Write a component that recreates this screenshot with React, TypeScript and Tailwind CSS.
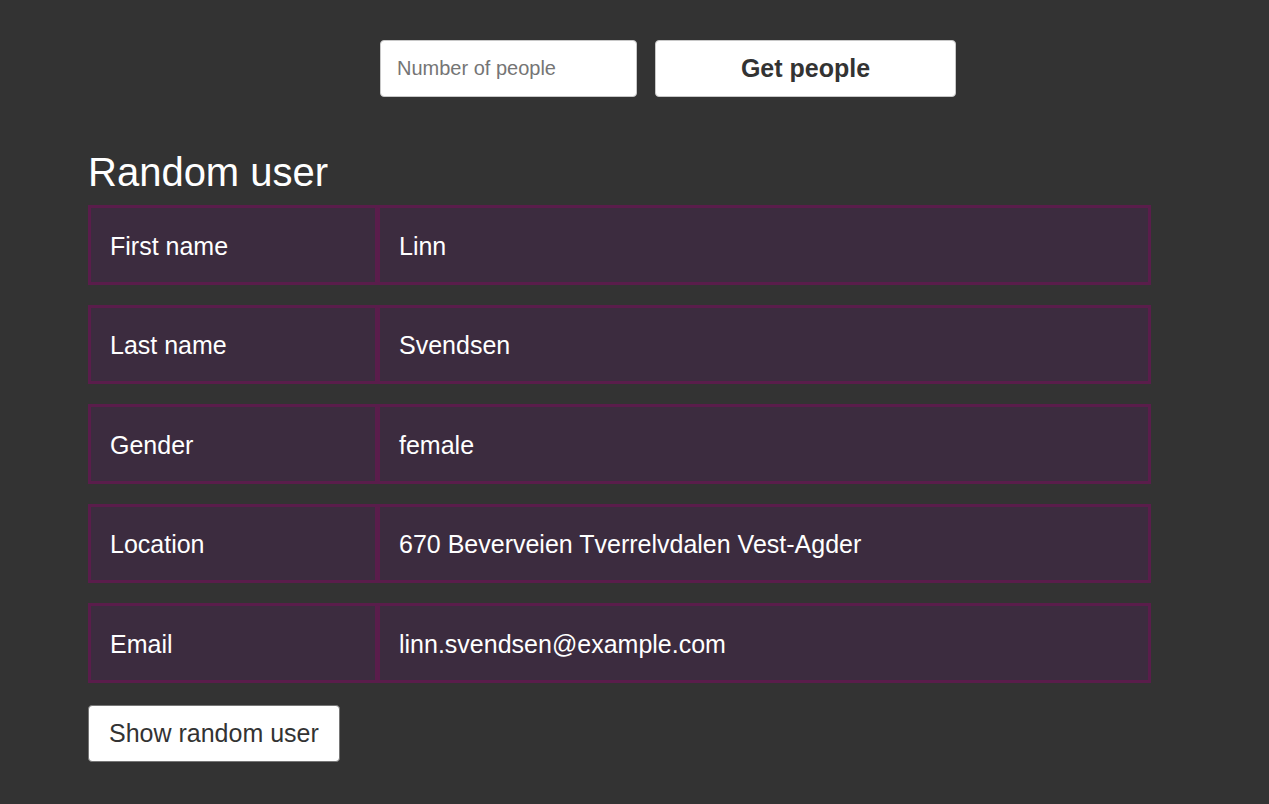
const rows: [string, string][] = [
  ["First name", "Linn"],
  ["Last name", "Svendsen"],
  ["Gender", "female"],
  ["Location", "670 Beverveien Tverrelvdalen Vest-Agder"],
  ["Email", "linn.svendsen@example.com"],
];

export default function App() {
  return (
    <div className="min-h-screen w-full bg-[#333333] font-['Liberation_Sans',Arial,sans-serif] text-white">
      {/* Fetch form */}
      <div className="flex gap-[18px] pl-[380px] pt-[40px]">
        <input
          type="number"
          placeholder="Number of people"
          className="h-[57px] w-[257px] rounded-[4px] border border-[#c8c8c8] bg-white px-4 text-[20px] text-[#333] placeholder:text-[#757575] outline-none"
        />
        <button className="h-[57px] w-[301px] rounded-[4px] border border-[#c8c8c8] bg-white text-[25px] font-bold text-[#333]">
          Get people
        </button>
      </div>

      <div className="px-[88px] pt-[52px]">
        <h1 className="text-[40px] leading-[46px] mb-[10px]">Random user</h1>

        <div className="flex w-[1063px] flex-col gap-[20px]">
          {rows.map(([label, value]) => (
            <div key={label} className="flex h-[79.5px]">
              <div className="flex w-[290px] items-center border-[3px] border-[#5a1d4b] bg-[#3c2c3f] pl-[19px] pt-[3px] text-[25px]">
                {label}
              </div>
              <div className="flex flex-1 items-center border-[3px] border-l-2 border-[#5a1d4b] bg-[#3c2c3f] pl-[19px] pt-[3px] text-[25px]">
                {value}
              </div>
            </div>
          ))}
        </div>

        <button className="mt-[22px] h-[57px] rounded-[4px] border border-[#767676] bg-white px-[20px] pt-[1px] text-[25px] text-[#333]">
          Show random user
        </button>
      </div>
    </div>
  );
}
